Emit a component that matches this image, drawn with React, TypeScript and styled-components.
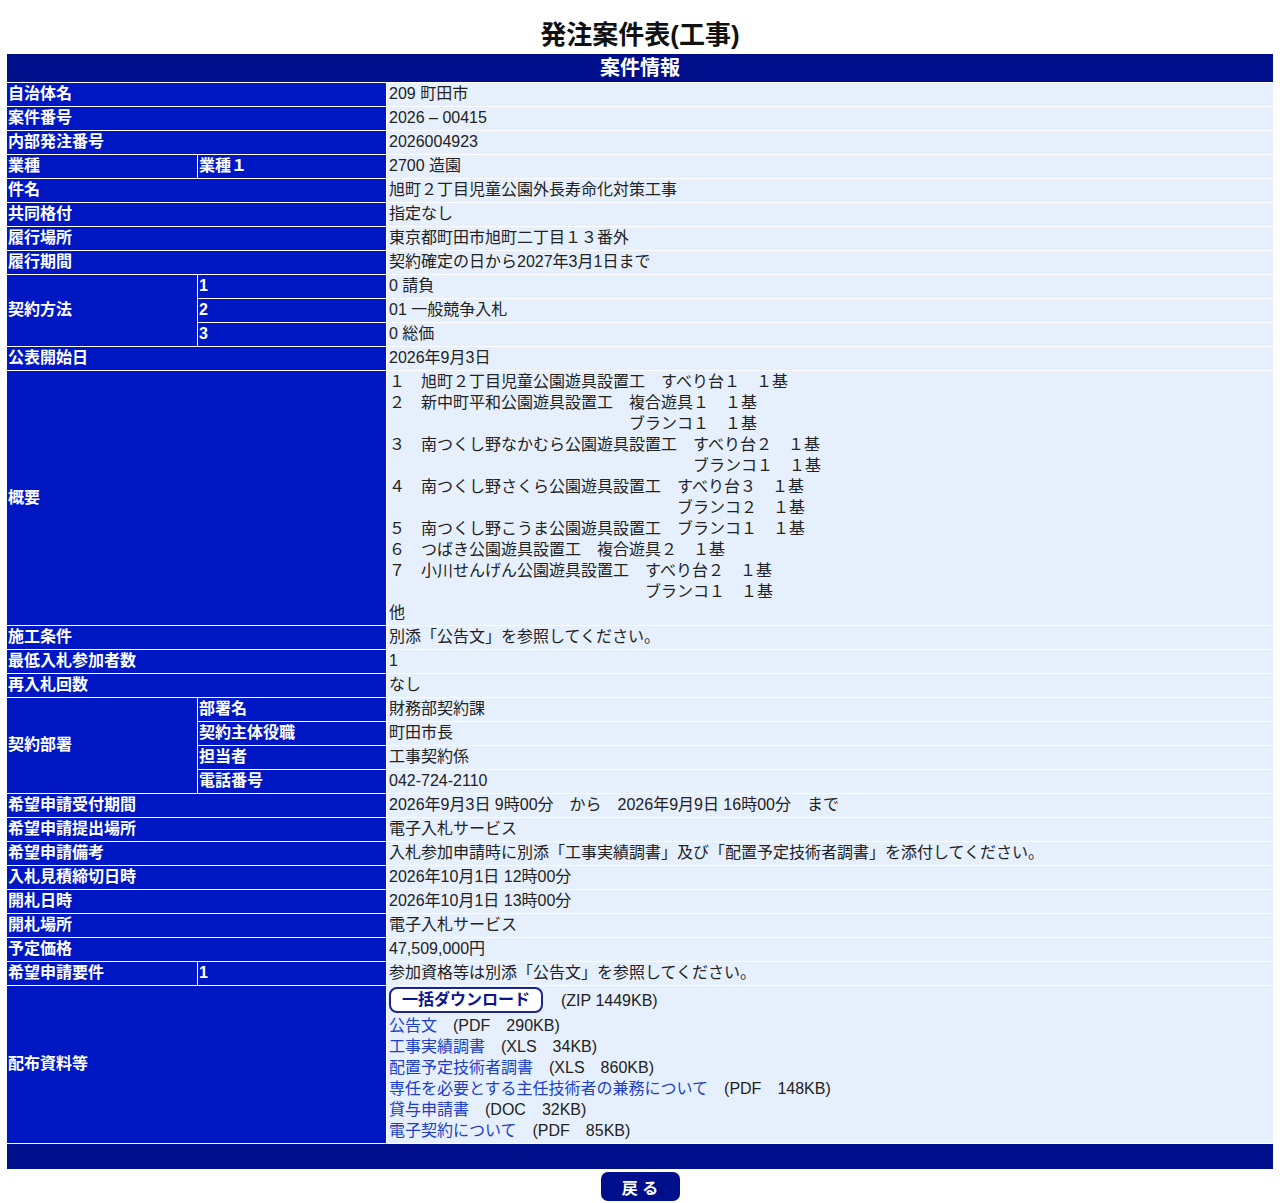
import React from "react";
import styled, { createGlobalStyle } from "styled-components";

const GlobalStyle = createGlobalStyle`
  html, body {
    margin: 0;
    padding: 0;
    background: #ffffff;
    font-family: "Liberation Sans", "Noto Sans CJK JP", sans-serif;
  }
`;

const Page = styled.div`
  padding: 0 6px;
  font-family: "Liberation Sans", "Noto Sans CJK JP", sans-serif;
`;

const Title = styled.h1`
  margin: 0 0 3px;
  padding-top: 20px;
  font-size: 26px;
  line-height: 30px;
  font-weight: bold;
  text-align: center;
  color: #111;
`;

const Table = styled.table`
  width: 100%;
  border-collapse: separate;
  border-spacing: 1px;
  table-layout: fixed;
  font-size: 16px;
`;

const HeaderCell = styled.th`
  background: #00108c;
  color: #fff;
  font-size: 20px;
  font-weight: bold;
  height: 28px;
  padding: 0;
  line-height: 27px;
  text-align: center;
`;

const LabelCell = styled.th`
  background: #0018c4;
  color: #fff;
  font-weight: bold;
  text-align: left;
  vertical-align: middle;
  padding: 0 1px 2px 1px;
  line-height: 21px;
  font-size: 16px;
  white-space: nowrap;
`;

const ValueCell = styled.td`
  background: #e6f0fc;
  color: #222;
  padding: 0 1px 2px 2px;
  line-height: 21px;
  vertical-align: middle;
  font-size: 16px;
  white-space: pre-wrap;
`;

const FooterCell = styled.td`
  background: #00108c;
  height: 25px;
  padding: 0;
`;

const FileLine = styled.div`
  display: flex;
  align-items: center;
  gap: 18px;
  height: 28px;
  padding-bottom: 1px;
`;

const DownloadButton = styled.button`
  height: 26px;
  padding: 0 11px;
  border: 2px solid #1a2590;
  border-radius: 8px;
  background: #fff;
  color: #0b1690;
  font-family: "Liberation Sans", "Noto Sans CJK JP", sans-serif;
  font-weight: bold;
  font-size: 16px;
  line-height: 20px;
  cursor: pointer;
`;

const FileRow = styled.div`
  line-height: 21px;
  white-space: pre;
`;

const FileLink = styled.a`
  color: #1d3ec8;
  text-decoration: none;
`;

const BackBar = styled.div`
  display: flex;
  justify-content: center;
  padding-top: 2px;
`;

const BackButton = styled.button`
  width: 79px;
  height: 29px;
  border: none;
  border-radius: 7px;
  background: #00108c;
  color: #fff;
  font-family: "Liberation Sans", "Noto Sans CJK JP", sans-serif;
  font-weight: bold;
  font-size: 16px;
  cursor: pointer;
`;

const gaiyou = [
  "１　旭町２丁目児童公園遊具設置工　すべり台１　１基",
  "２　新中町平和公園遊具設置工　複合遊具１　１基",
  "　　　　　　　　　　　　　　　ブランコ１　１基",
  "３　南つくし野なかむら公園遊具設置工　すべり台２　１基",
  "　　　　　　　　　　　　　　　　　　　ブランコ１　１基",
  "４　南つくし野さくら公園遊具設置工　すべり台３　１基",
  "　　　　　　　　　　　　　　　　　　ブランコ２　１基",
  "５　南つくし野こうま公園遊具設置工　ブランコ１　１基",
  "６　つばき公園遊具設置工　複合遊具２　１基",
  "７　小川せんげん公園遊具設置工　すべり台２　１基",
  "　　　　　　　　　　　　　　　　ブランコ１　１基",
  "他",
].join("\n");

const files: { name: string; info: string }[] = [
  { name: "公告文", info: "　(PDF　290KB)" },
  { name: "工事実績調書", info: "　(XLS　34KB)" },
  { name: "配置予定技術者調書", info: "　(XLS　860KB)" },
  { name: "専任を必要とする主任技術者の兼務について", info: "　(PDF　148KB)" },
  { name: "貸与申請書", info: "　(DOC　32KB)" },
  { name: "電子契約について", info: "　(PDF　85KB)" },
];

type Simple = [string, string];

const Row2 = ({ label, value }: { label: string; value: React.ReactNode }) => (
  <tr>
    <LabelCell colSpan={2}>{label}</LabelCell>
    <ValueCell>{value}</ValueCell>
  </tr>
);

const topRows: Simple[] = [
  ["自治体名", "209 町田市"],
  ["案件番号", "2026 – 00415"],
  ["内部発注番号", "2026004923"],
];

const midRows: Simple[] = [
  ["件名", "旭町２丁目児童公園外長寿命化対策工事"],
  ["共同格付", "指定なし"],
  ["履行場所", "東京都町田市旭町二丁目１３番外"],
  ["履行期間", "契約確定の日から2027年3月1日まで"],
];

const afterGaiyou: Simple[] = [
  ["施工条件", "別添「公告文」を参照してください。"],
  ["最低入札参加者数", "1"],
  ["再入札回数", "なし"],
];

const afterDept: Simple[] = [
  ["希望申請受付期間", "2026年9月3日 9時00分　から　2026年9月9日 16時00分　まで"],
  ["希望申請提出場所", "電子入札サービス"],
  ["希望申請備考", "入札参加申請時に別添「工事実績調書」及び「配置予定技術者調書」を添付してください。"],
  ["入札見積締切日時", "2026年10月1日 12時00分"],
  ["開札日時", "2026年10月1日 13時00分"],
  ["開札場所", "電子入札サービス"],
  ["予定価格", "47,509,000円"],
];

const methods: Simple[] = [
  ["1", "0 請負"],
  ["2", "01 一般競争入札"],
  ["3", "0 総価"],
];

const dept: Simple[] = [
  ["部署名", "財務部契約課"],
  ["契約主体役職", "町田市長"],
  ["担当者", "工事契約係"],
  ["電話番号", "042-724-2110"],
];

export default function App() {
  return (
    <>
      <GlobalStyle />
      <Page>
        <Title>発注案件表(工事)</Title>
        <Table>
          <colgroup>
            <col style={{ width: "190px" }} />
            <col style={{ width: "188px" }} />
            <col />
          </colgroup>
          <tbody>
            <tr>
              <HeaderCell colSpan={3}>案件情報</HeaderCell>
            </tr>
            {topRows.map(([l, v]) => (
              <Row2 key={l} label={l} value={v} />
            ))}
            <tr>
              <LabelCell>業種</LabelCell>
              <LabelCell>業種１</LabelCell>
              <ValueCell>2700 造園</ValueCell>
            </tr>
            {midRows.map(([l, v]) => (
              <Row2 key={l} label={l} value={v} />
            ))}
            {methods.map(([n, v], i) => (
              <tr key={n}>
                {i === 0 && <LabelCell rowSpan={3}>契約方法</LabelCell>}
                <LabelCell>{n}</LabelCell>
                <ValueCell>{v}</ValueCell>
              </tr>
            ))}
            <Row2 label="公表開始日" value="2026年9月3日" />
            <Row2 label="概要" value={gaiyou} />
            {afterGaiyou.map(([l, v]) => (
              <Row2 key={l} label={l} value={v} />
            ))}
            {dept.map(([n, v], i) => (
              <tr key={n}>
                {i === 0 && <LabelCell rowSpan={4}>契約部署</LabelCell>}
                <LabelCell>{n}</LabelCell>
                <ValueCell>{v}</ValueCell>
              </tr>
            ))}
            {afterDept.map(([l, v]) => (
              <Row2 key={l} label={l} value={v} />
            ))}
            <tr>
              <LabelCell>希望申請要件</LabelCell>
              <LabelCell>1</LabelCell>
              <ValueCell>参加資格等は別添「公告文」を参照してください。</ValueCell>
            </tr>
            <Row2
              label="配布資料等"
              value={
                <>
                  <FileLine>
                    <DownloadButton>一括ダウンロード</DownloadButton>
                    <span>(ZIP 1449KB)</span>
                  </FileLine>
                  {files.map((f) => (
                    <FileRow key={f.name}>
                      <FileLink href="#">{f.name}</FileLink>
                      {f.info}
                    </FileRow>
                  ))}
                </>
              }
            />
            <tr>
              <FooterCell colSpan={3} />
            </tr>
          </tbody>
        </Table>
        <BackBar>
          <BackButton>戻 る</BackButton>
        </BackBar>
      </Page>
    </>
  );
}
